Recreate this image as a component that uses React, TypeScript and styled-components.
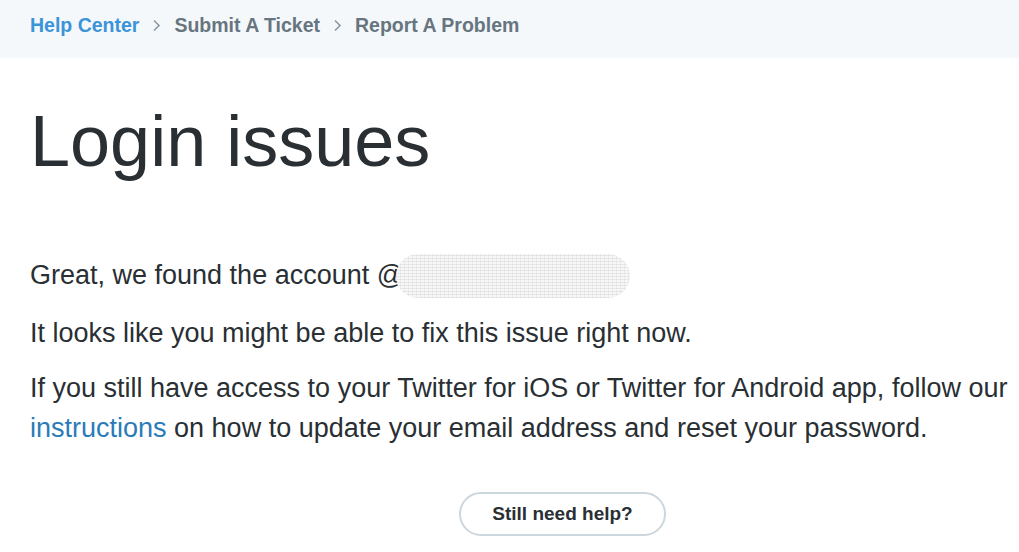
import styled, { createGlobalStyle } from 'styled-components';

const GlobalStyle = createGlobalStyle`
    html, body {
        margin: 0;
        padding: 0;
        background: #ffffff;
        font-family: "Liberation Sans", Arial, sans-serif;
        color: #292f33;
        overflow: hidden;
    }
`

const Breadcrumbs = styled.nav`
    height: 58px;
    background: #f5f8fa;
    display: flex;
    align-items: center;
    gap: 13px;
    padding: 0 30px 8px;
    box-sizing: border-box;
    font-size: 19.5px;
    font-weight: 700;
`
const Crumb = styled.a<{ $active?: boolean }>`
    color: ${p => p.$active ? '#3b94d9' : '#66757f'};
    text-decoration: none;
`
const Chevron = styled.svg`
    width: 9px;
    height: 13px;
    margin-top: 1px;
`

const Content = styled.main`
    padding: 0 0 0 30px;
`
const Title = styled.h1`
    font-size: 72px;
    font-weight: 400;
    line-height: 86px;
    margin: 40px 0 70px;
    color: #292f33;
`
const Para = styled.p`
    font-size: 27px;
    line-height: 40px;
    margin: 0 0 15px;
    padding-right: 4px;
`
const Link = styled.a`
    color: #2b7bb9;
    text-decoration: none;
`
const Redacted = styled.span`
    display: inline-block;
    width: 234px;
    height: 44px;
    margin-left: -8px;
    vertical-align: -14px;
    border-radius: 22px;
    background:
        repeating-linear-gradient(0deg, rgba(200,200,200,0.35) 0 1px, transparent 1px 3px),
        repeating-linear-gradient(90deg, rgba(210,210,210,0.3) 0 1px, transparent 1px 4px),
        #f7f7f7;
    filter: blur(0.6px);
`
const ButtonRow = styled.div`
    display: flex;
    justify-content: center;
    margin: 44px 0 0 76px;
`
const HelpButton = styled.button`
    width: 207px;
    height: 44px;
    border: 2px solid #ccd6dd;
    border-radius: 100px;
    background: #ffffff;
    color: #292f33;
    font-family: "Liberation Sans", Arial, sans-serif;
    font-size: 19px;
    font-weight: 700;
    cursor: pointer;
`

const Arrow = () => (
    <Chevron viewBox="0 0 9 13">
        <path d="M2 1.5 L7 6.5 L2 11.5" fill="none" stroke="#8899a6" strokeWidth="1.6" />
    </Chevron>
)

const App = () => {
    return (
        <>
            <GlobalStyle />
            <Breadcrumbs>
                <Crumb $active href="#">Help Center</Crumb>
                <Arrow />
                <Crumb href="#">Submit A Ticket</Crumb>
                <Arrow />
                <Crumb href="#">Report A Problem</Crumb>
            </Breadcrumbs>
            <Content>
                <Title>Login issues</Title>
                <Para>Great, we found the account @<Redacted /></Para>
                <Para>It looks like you might be able to fix this issue right now.</Para>
                <Para>
                    If you still have access to your Twitter for iOS or Twitter for Android app, follow our{' '}
                    <Link href="#">instructions</Link> on how to update your email address and reset your password.
                </Para>
                <ButtonRow>
                    <HelpButton>Still need help?</HelpButton>
                </ButtonRow>
            </Content>
        </>
    )
}

export default App
